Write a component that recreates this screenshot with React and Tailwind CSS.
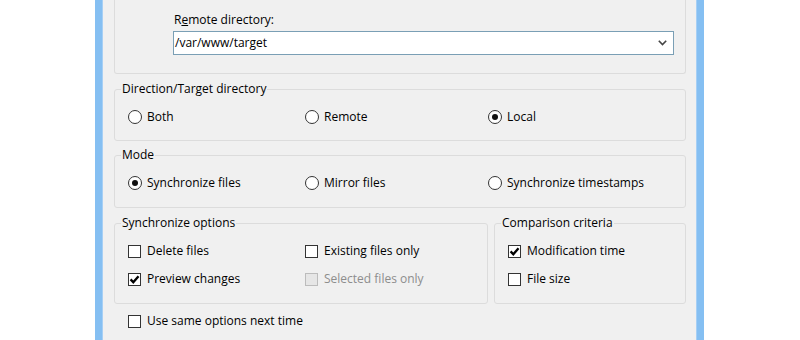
import React from 'react'

function Radio({ checked, label, className = '' }) {
  return (
    <div className={`flex items-center h-4 ${className}`}>
      <span className="w-[14px] h-[14px] shrink-0 rounded-full border border-[#333333] bg-white flex items-center justify-center">
        {checked && <span className="w-[6px] h-[6px] rounded-full bg-[#111111]" />}
      </span>
      <span className="ml-[5px] whitespace-nowrap">{label}</span>
    </div>
  )
}

function Check({ checked, disabled, label, className = '' }) {
  return (
    <div className={`flex items-center h-4 ${className}`}>
      <span
        className={
          disabled
            ? 'w-[13px] h-[13px] shrink-0 border border-[#bcbcbc] bg-[#e6e6e6]'
            : 'w-[13px] h-[13px] shrink-0 border border-[#333333] bg-white flex items-center justify-center'
        }
      >
        {checked && (
          <svg width="11" height="11" viewBox="0 0 11 11">
            <path d="M1.6 5.4 L4.3 8.3 L9.5 2.2" fill="none" stroke="#000" strokeWidth="2.3" />
          </svg>
        )}
      </span>
      <span className={`ml-[6px] whitespace-nowrap ${disabled ? 'text-[#8d8d8d]' : ''}`}>{label}</span>
    </div>
  )
}

function Group({ title, className = '', children }) {
  return (
    <fieldset className={`border border-[#dcdcdc] rounded-[3px] ${className}`}>
      <legend className="ml-[6px] px-[1px] leading-4">{title}</legend>
      {children}
    </fieldset>
  )
}

export default function App() {
  return (
    <div className="w-[800px] h-[340px] bg-white flex overflow-hidden text-[12px] text-black font-['Open_Sans','Noto_Sans',sans-serif]">
      <div className="w-[95px] shrink-0" />
      <div className="w-[8px] shrink-0 bg-[#85bff2] border-r border-[#a6cff5]" />

      <div className="w-[593px] shrink-0 bg-[#f0f0f0] pl-[11px] pr-[10px]">
        {/* remote directory box, cut at the top */}
        <div className="h-[74px] border-x border-b border-[#dcdcdc] rounded-b-[3px] flex flex-col justify-end pl-[58px] pb-[18px]">
          <div className="leading-4 pl-[1px] mb-[3px] whitespace-nowrap">
            R<span className="underline">e</span>mote directory:
          </div>
          <div className="w-[501px] h-[24px] border border-[#7a9fb5] bg-white flex items-center justify-between pl-[1px] pr-[6px]">
            <span>/var/www/target</span>
            <svg width="9" height="6" viewBox="0 0 9 6">
              <path d="M0.8 0.8 L4.5 4.6 L8.2 0.8" fill="none" stroke="#444" strokeWidth="1.6" />
            </svg>
          </div>
        </div>

        <Group title="Direction/Target directory" className="mt-[7px]">
          <div className="flex pl-[13px] pt-[12px] pb-[15px]">
            <Radio label="Both" className="w-[177px]" />
            <Radio label="Remote" className="w-[183px]" />
            <Radio label="Local" checked />
          </div>
        </Group>

        <Group title="Mode" className="mt-[6px]">
          <div className="flex pl-[13px] pt-[12px] pb-[16px]">
            <Radio label="Synchronize files" checked className="w-[177px]" />
            <Radio label="Mirror files" className="w-[183px]" />
            <Radio label="Synchronize timestamps" />
          </div>
        </Group>

        <div className="flex gap-[6px] mt-[7px]">
          <Group title="Synchronize options" className="w-[374px]">
            <div className="pl-[13px] pt-[12px] pb-[16px] flex flex-col gap-[12px]">
              <div className="flex">
                <Check label="Delete files" className="w-[177px]" />
                <Check label="Existing files only" />
              </div>
              <div className="flex">
                <Check label="Preview changes" checked className="w-[177px]" />
                <Check label="Selected files only" disabled />
              </div>
            </div>
          </Group>
          <Group title="Comparison criteria" className="w-[192px]">
            <div className="pl-[13px] pt-[12px] pb-[16px] flex flex-col gap-[12px]">
              <Check label="Modification time" checked />
              <Check label="File size" />
            </div>
          </Group>
        </div>

        <Check label="Use same options next time" className="mt-[9px] ml-[14px]" />
      </div>

      <div className="w-[8px] shrink-0 bg-[#85bff2] border-l border-[#a6cff5]" />
      <div className="flex-1" />
    </div>
  )
}
